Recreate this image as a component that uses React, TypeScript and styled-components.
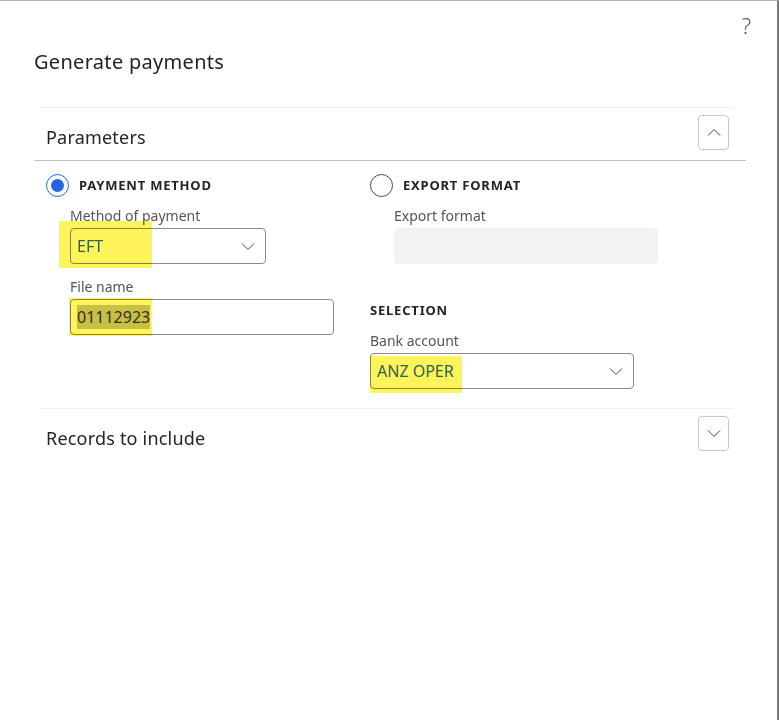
import React from "react";
import styled, { createGlobalStyle } from "styled-components";

const Global = createGlobalStyle`
  html, body { margin: 0; padding: 0; background: #ffffff; }
  body { font-family: "Noto Sans", "Open Sans", sans-serif; color: #242424; }
  * { box-sizing: border-box; }
`;

const Frame = styled.div`
  width: 779px;
  height: 720px;
  border-top: 1px solid #a9b4c7;
  border-right: 2px solid #7a7a7a;
  display: flex;
  flex-direction: column;
  background: #fff;
`;

const HelpRow = styled.div`
  display: flex;
  justify-content: flex-end;
  padding: 10px 26px 0 0;
  height: 38px;
`;

const Help = styled.span`
  font-family: "Noto Sans", sans-serif;
  font-weight: 300;
  font-size: 22px;
  line-height: 28px;
  color: #5a5a5a;
`;

const Title = styled.h1`
  margin: 9px 0 0 34px;
  font-size: 20px;
  font-weight: 400;
  line-height: 28px;
  color: #242424;
  letter-spacing: 0.3px;
`;

const SectionHeader = styled.div<{ $open?: boolean }>`
  margin: ${(p) => (p.$open ? "31px 43px 0 40px" : "0 43px 0 40px")};
  border-top: 1px solid #f0f0f0;
  height: 53px;
  display: flex;
  align-items: center;
  justify-content: space-between;
  padding: 0 5px 3px 6px;
`;

const SectionTitle = styled.h2`
  margin: 0;
  padding-top: 8px;
  font-size: 18px;
  font-weight: 400;
  color: #242424;
  letter-spacing: 0.2px;
`;

const ToggleButton = styled.button`
  width: 31px;
  height: 35px;
  border: 1px solid #c8c8c8;
  border-radius: 4px;
  background: #fff;
  padding: 0;
  display: flex;
  align-items: center;
  justify-content: center;
`;

const Divider = styled.div`
  margin: 0 31px 0 34px;
  border-top: 1px solid #c2c2c2;
`;

const Columns = styled.div`
  display: flex;
  padding: 12px 0 19px 46px;
`;

const Column = styled.div<{ $w: number }>`
  width: ${(p) => p.$w}px;
  display: flex;
  flex-direction: column;
`;

const RadioRow = styled.label`
  display: flex;
  align-items: center;
  gap: 10px;
  height: 24px;
`;

const RadioCircle = styled.span<{ $checked?: boolean }>`
  width: 23px;
  height: 23px;
  border-radius: 50%;
  border: 1px solid ${(p) => (p.$checked ? "#2266e3" : "#4a4a4a")};
  display: flex;
  align-items: center;
  justify-content: center;
  &::after {
    content: "";
    width: 13px;
    height: 13px;
    border-radius: 50%;
    background: ${(p) => (p.$checked ? "#2266e3" : "transparent")};
  }
`;

const GroupTitle = styled.span`
  font-size: 13px;
  font-weight: 700;
  letter-spacing: 0.8px;
  color: #242424;
`;

const Field = styled.div<{ $indent?: number; $top?: number }>`
  display: flex;
  flex-direction: column;
  margin-left: ${(p) => p.$indent ?? 0}px;
  margin-top: ${(p) => p.$top ?? 0}px;
`;

const Label = styled.span`
  font-size: 14px;
  line-height: 18px;
  color: #555;
  margin-bottom: 3px;
`;

const Box = styled.div<{ $w: number; $disabled?: boolean }>`
  position: relative;
  width: ${(p) => p.$w}px;
  height: 36px;
  border-radius: 4px;
  border: 1px solid ${(p) => (p.$disabled ? "#f3f2f1" : "#8a8a8a")};
  background: ${(p) => (p.$disabled ? "#f3f2f1" : "#fff")};
  display: flex;
  align-items: center;
  justify-content: space-between;
  padding: 0 10px 0 6px;
`;

const Value = styled.span<{ $tone?: "link" | "plain" }>`
  font-size: 16px;
  color: ${(p) => (p.$tone === "link" ? "#2a66f0" : "#333")};
`;

const Selected = styled.span`
  background: #c8c8c8;
  padding: 1px 0;
`;

/* yellow marker stroke laid over a field */
const Marker = styled.span`
  position: absolute;
  background: #fff45a;
  mix-blend-mode: multiply;
  pointer-events: none;
`;

const SubHeading = styled.span`
  font-size: 13px;
  font-weight: 700;
  letter-spacing: 0.8px;
  color: #242424;
  margin-bottom: 13px;
`;

const Chevron = ({ up, size = 14 }: { up?: boolean; size?: number }) => (
  <svg width={size} height={size / 2 + 2} viewBox="0 0 14 9">
    <polyline
      points={up ? "1,7.5 7,1.5 13,7.5" : "1,1.5 7,7.5 13,1.5"}
      fill="none"
      stroke="#444"
      strokeWidth="1"
    />
  </svg>
);

export default function App() {
  return (
    <>
      <Global />
      <Frame>
        <HelpRow>
          <Help>?</Help>
        </HelpRow>
        <Title>Generate payments</Title>

        <SectionHeader $open>
          <SectionTitle>Parameters</SectionTitle>
          <ToggleButton aria-label="Collapse">
            <Chevron up />
          </ToggleButton>
        </SectionHeader>
        <Divider />

        <Columns>
          <Column $w={324}>
            <RadioRow>
              <RadioCircle $checked />
              <GroupTitle>PAYMENT METHOD</GroupTitle>
            </RadioRow>
            <Field $indent={24} $top={10}>
              <Label>Method of payment</Label>
              <Box $w={196}>
                <Value $tone="link">EFT</Value>
                <Chevron />
                <Marker style={{ left: -12, top: -8, width: 93, height: 47 }} />
              </Box>
            </Field>
            <Field $indent={24} $top={14}>
              <Label>File name</Label>
              <Box $w={264}>
                <Value>
                  <Selected>01112923</Selected>
                </Value>
                <Marker style={{ left: -2, top: -2, width: 83, height: 38 }} />
              </Box>
            </Field>
          </Column>

          <Column $w={300}>
            <RadioRow>
              <RadioCircle />
              <GroupTitle>EXPORT FORMAT</GroupTitle>
            </RadioRow>
            <Field $indent={24} $top={10}>
              <Label>Export format</Label>
              <Box $w={264} $disabled />
            </Field>
            <Field $top={37}>
              <SubHeading>SELECTION</SubHeading>
              <Label>Bank account</Label>
              <Box $w={264}>
                <Value $tone="link">ANZ OPER</Value>
                <Chevron />
                <Marker style={{ left: -1, top: 2, width: 92, height: 37 }} />
              </Box>
            </Field>
          </Column>
        </Columns>

        <SectionHeader>
          <SectionTitle>Records to include</SectionTitle>
          <ToggleButton aria-label="Expand">
            <Chevron />
          </ToggleButton>
        </SectionHeader>
      </Frame>
    </>
  );
}
